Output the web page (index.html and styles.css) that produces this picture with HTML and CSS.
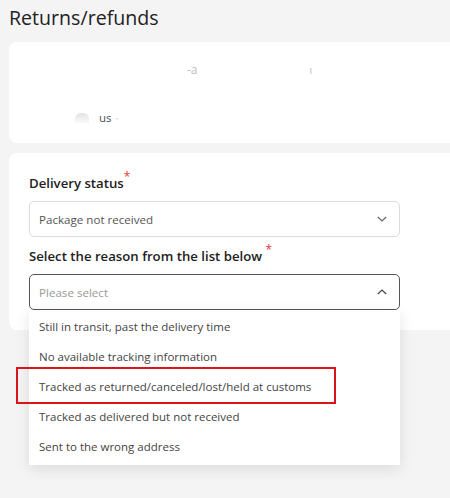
FILE: index.html
```html
<!DOCTYPE html>
<html lang="en">
<head>
<meta charset="utf-8">
<title>Returns/refunds</title>
<link rel="stylesheet" href="styles.css">
</head>
<body>
<div class="page">
  <h1 class="title">Returns/refunds</h1>
  <section class="card card-info">
    <div class="info-row info-row-1"><span class="faint">-a</span><span class="faint tick">ı</span></div>
    <div class="info-row info-row-2"><span class="blur-mark"></span><span class="faint-dark">us</span><span class="faint tick">·</span></div>
  </section>
  <section class="card card-form">
    <div class="field">
      <div class="label">Delivery status<span class="req">*</span></div>
      <div class="select">
        <span class="select-value">Package not received</span>
        <svg class="chev" width="12" height="8" viewBox="0 0 12 8"><path d="M1.8 2 L6 6 L10.2 2" fill="none" stroke="#666" stroke-width="1.2"/></svg>
      </div>
    </div>
    <div class="field field-2">
      <div class="label">Select the reason from the list below <span class="req">*</span></div>
      <div class="select select-open">
        <span class="select-placeholder">Please select</span>
        <svg class="chev" width="12" height="8" viewBox="0 0 12 8"><path d="M1.8 6 L6 2 L10.2 6" fill="none" stroke="#444" stroke-width="1.2"/></svg>
        <ul class="menu">
          <li class="opt">Still in transit, past the delivery time</li>
          <li class="opt">No available tracking information</li>
          <li class="opt opt-marked">Tracked as returned/canceled/lost/held at customs<span class="mark"></span></li>
          <li class="opt">Tracked as delivered but not received</li>
          <li class="opt">Sent to the wrong address</li>
        </ul>
      </div>
    </div>
  </section>
</div>
</body>
</html>
```

FILE: styles.css
```css
html, body {
  margin: 0;
  padding: 0;
  background: #f4f4f4;
  overflow: hidden;
  width: 450px;
  height: 498px;
}

body {
  font-family: "Open Sans", "Noto Sans", sans-serif;
  color: #222;
}

.page {
  padding-left: 9px;
}

.title {
  margin: 0;
  padding-top: 6px;
  font-size: 19.6px;
  line-height: 24px;
  font-weight: 400;
  color: #222;
}

.card {
  background: #fff;
  border-radius: 8px 0 0 8px;
  width: 441px;
  box-sizing: border-box;
}

.card-info {
  margin-top: 12px;
  height: 101px;
  padding: 18px 0 0 0;
}

.info-row {
  display: flex;
  align-items: center;
  font-size: 12px;
  line-height: 20px;
  color: #bbb;
}

.info-row-1 {
  padding-left: 178px;
  gap: 112px;
}

.info-row-2 {
  margin-top: 28px;
  padding-left: 50px;
  gap: 4px;
}

.faint { color: #bdbdbd; }
.faint-dark { color: #4a5260; font-size: 11.5px; margin-left: 6px; }
.tick { font-size: 10px; }

.blur-mark {
  width: 14px;
  height: 10px;
  margin-left: 16px;
  border-radius: 6px 6px 0 0;
  background: linear-gradient(#e2e2e2, #fafafa);
}

.card-form {
  margin-top: 10px;
  height: 177px;
  padding: 20px 0 0 20px;
}

.field-2 {
  margin-top: 9px;
}

.label {
  font-size: 13.2px;
  line-height: 20px;
  font-weight: 600;
  color: #222;
}

.req {
  color: #e03a3a;
  font-size: 12px;
  font-weight: 400;
  vertical-align: 7px;
  line-height: 0;
}

.select {
  position: relative;
  margin-top: 8px;
  width: 371px;
  height: 36px;
  box-sizing: border-box;
  border: 1px solid #dcdcdc;
  border-radius: 5px;
  display: flex;
  align-items: center;
  justify-content: space-between;
  padding: 0 11px 0 9px;
  font-size: 11.6px;
}

.select-value { color: #555; }
.select-placeholder { color: #999; }

.select-open {
  border-color: #555;
}

.chev { display: block; }

.menu {
  position: absolute;
  left: -1px;
  top: 35px;
  width: 371px;
  margin: 0;
  padding: 2px 0 3px;
  list-style: none;
  background: #fff;
  box-shadow: 0 4px 14px rgba(0, 0, 0, 0.1);
  z-index: 2;
  box-sizing: border-box;
}

.opt {
  height: 30px;
  line-height: 30px;
  padding-left: 10px;
  font-size: 11.5px;
  color: #444;
  position: relative;
}

.mark {
  position: absolute;
  left: -13px;
  top: -5px;
  width: 320px;
  height: 37px;
  box-sizing: border-box;
  border: 2px solid #d9141b;
}
```
